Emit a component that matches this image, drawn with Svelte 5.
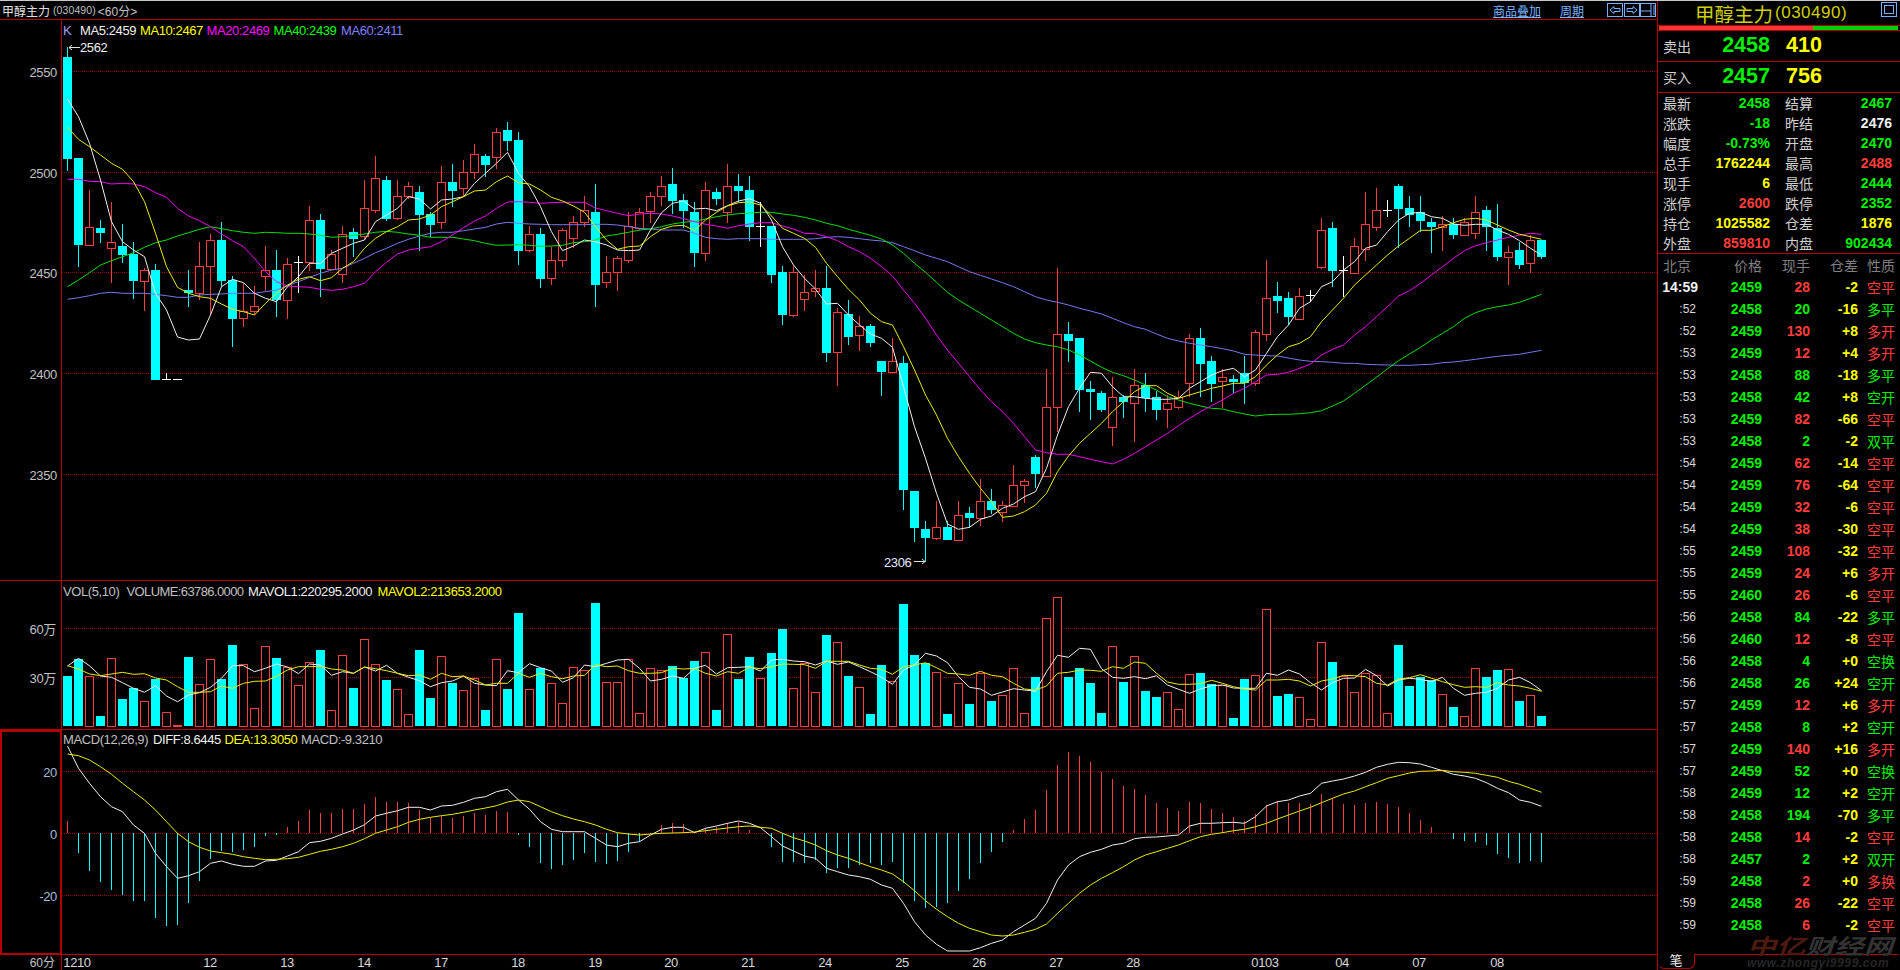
<script>
  const xAt = (i) => Math.round(67.3 + 11 * i) + 0.5;
  const off = (arr, d) => arr.map((v) => v + d);
  const pts = (arr, f) => arr.map((v, i) => xAt(i) + ',' + f(v).toFixed(1)).join(' ');

  const ma5 = [297,350,430,540,665,725,750,770,880,930,1011,1020,1017,945,860,838,848,880,895,905,860,830,790,790,760,745,730,720,665,645,625,590,597,627,600,597,590,550,520,490,457,520,560,620,695,752,738,720,725,735,750,752,
    ...off([330,270,218,190,183,207,205,212,197,183,176,190,240,320,375,415,447,492,490,525,555,582,595,622,740,860],420),
    1375,1480,1572,1588,1582,1558,1548,1525,1512,1490,1475,1405,1305,
    ...off([800,745,697,700,740,770,770,775,778,778,775,745,725,705,692,685,710,690,640,590],420),
    975,925,905,860,845,810,785,745,735,695,660,640,637,650,655,672,676,673,673,690,703,722,745,765];
  const ma10 = [382,418,440,465,490,508,545,605,700,800,862,880,890,895,912,928,935,945,910,880,855,838,830,842,833,805,785,745,715,695,680,660,657,645,620,605,590,573,570,545,528,548,552,570,592,603,618,637,680,720,748,740,
    ...off([318,290,268,258,256,272,240,217,198,188,186,195,228,265,280,295,322,370,410,448,480,520,545,555,620,690,765,825],420),
    1315,1370,1420,1465,1505,1552,1548,1535,1515,1480,1415,1368,1330,
    ...off([880,850,815,785,755,737,737,760,775,765,755,745,738,730,730],420),
    1130,1095,1065,1040,1030,1010,965,930,895,855,825,795,765,738,715,691,691,680,668,658,655,660,675,690,703,710,718];
  const ma20 = [538,538,544,545,552,550,552,560,578,592,625,648,662,680,702,722,740,775,815,845,858,860,862,868,871,868,860,850,815,787,762,750,745,740,725,705,683,663,648,625,606,605,607,610,608,607,607,607,624,632,640,647,
    ...off([222,220,222,228,236,245,253,258,265,257,252,248,248,258,267,280,281,290,302,320,335,355,380,408,450,490,535,585,630,670,710,750,785,815,850,890,930,938,943,943,950,958,965,972,958,940,920,900,880,857,835,815,797,780,760,745,725,705,703],420),
    1117,1105,1092,1065,1048,1035,1005,980,950,920,888,872,850,825,800,775,752,737,728,720,712,706,700,703];
  const ma40 = [860,840,818,795,782,770,758,742,728,720,708,698,688,680,686,692,697,700,697,698,700,700,702,706,712,710,706,702,697,694,697,702,706,712,712,712,717,722,730,736,735,734,736,739,738,736,728,725,720,708,703,697,
    ...off([270,267,260,252,247,244,237,230,225,221,219,217,217,222,226,232,240,250,257,268,277,286,297,315,340,370,397,427,457,480,500,520,540,560,580,597,608,615,620,630,645,663,682,697,707,720,735,750,770,780,790,798,805,807,815,822,828,824,823],420),
    1243,1241,1238,1232,1218,1203,1180,
    ...off([286,262,236,212,192,172,150,130,110,85,68,57,50,45,37,25,13],870)];
  const ma60 = [898,893,887,880,877,880,880,880,883,887,892,892,885,883,882,880,880,880,875,870,857,845,832,820,810,805,790,775,758,745,730,718,708,700,697,697,692,687,682,672,667,670,672,673,674,674,674,674,673,673,675,680,
    ...off([265,267,270,270,270,280,292,296,298,296,296,296,298,298,298,298,296,292,290,292,296,300,303,308,320,332,345,355,365,380,395,406,417,428,440,455,470,480,487,495,505,513,522,535,548,560,568,582,595,603],420),
    ...off([160,165,170,176,183,193,195,197,198,204,210,214,215,217,220,220,223,224,225,226,226,224,223,218,216,212,208,203,199,196,193,187,181],870)];

  const mainY = (v) => v / 3;
  const lines = [
    { cls: 'l60', p: pts(ma60, mainY) },
    { cls: 'l40', p: pts(ma40, mainY) },
    { cls: 'l20', p: pts(ma20, mainY) },
    { cls: 'l5', p: pts(ma5, mainY) },
    { cls: 'l10', p: pts(ma10, mainY) }
  ];

  // type (0 falling, 1 rising, 2 flat), body top, body bottom, wick top, wick bottom
  const candles = [
    [0,57,159,47,171],[0,158,245,158,267],[1,227,245,190,245],[0,228,233,220,243],[1,242,248,202,283],[0,246,255,224,263],[0,254,281,242,299],[1,270,281,268,311],[0,270,380,264,380],[2,379,379,373,379],
    [2,379,379,379,379],[0,290,293,270,307],[1,266,293,242,300],[1,240,266,234,315],[0,240,281,222,287],[0,280,319,276,347],[1,311,318,283,327],[1,306,311,286,315],[1,270,276,246,291],[0,270,300,250,317],
    [1,264,300,258,319],[2,262,262,256,293],[1,220,262,206,271],[0,220,269,214,297],[1,254,269,250,270],[1,234,274,226,283],[0,232,239,228,257],[1,208,236,180,240],[1,178,210,156,213],[0,180,219,176,221],
    [1,196,218,180,220],[1,186,196,182,199],[0,192,215,186,251],[0,214,225,212,237],[1,182,222,166,229],[0,182,191,164,207],[1,172,188,160,197],[1,154,172,144,179],[0,156,165,154,177],[1,132,157,128,169],
    [0,130,141,122,151],[0,140,251,132,265],[1,234,250,226,252],[0,234,279,228,288],[1,260,278,247,285],[1,230,260,228,267],[1,222,238,216,248],[1,210,222,196,227],[0,212,285,184,307],[1,272,282,256,288],
    [1,258,272,256,291],[1,226,260,212,263],[1,212,228,208,230],[1,196,211,192,223],[1,186,196,176,206],[0,184,201,168,214],[0,200,211,194,228],[0,212,253,202,267],[1,190,253,182,261],[0,192,199,188,205],
    [1,186,212,164,223],[0,186,191,174,202],[0,190,227,176,241],[2,226,226,202,247],[0,226,275,226,283],[0,272,315,266,325],[1,272,315,266,317],[1,292,299,275,311],[1,288,291,270,297],[0,288,353,266,362],
    [1,312,352,308,386],[0,314,337,300,345],[1,326,335,316,351],[0,326,343,324,347],[0,361,372,361,396],[1,361,372,338,372],[0,363,490,356,510],[0,491,528,491,542],[0,529,538,521,562],[1,527,538,501,540],
    [0,527,540,521,540],[1,515,540,501,540],[0,513,518,507,528],[1,501,518,479,526],[0,501,510,489,514],[1,505,512,501,522],[1,485,506,465,506],[1,481,485,479,503],[0,457,474,455,488],[1,407,476,369,476],
    [1,334,407,268,432],[0,334,341,322,362],[0,338,390,338,412],[0,389,392,381,420],[0,393,410,391,412],[1,397,427,377,446],[0,397,402,395,418],[1,385,403,369,442],[0,385,398,373,412],[0,397,410,391,420],
    [1,403,409,395,428],[1,397,407,391,409],[1,338,383,334,397],[0,338,364,328,397],[0,361,384,356,402],[1,377,381,369,408],[0,379,382,375,393],[0,373,383,356,404],[1,332,383,330,386],[1,298,334,260,341],
    [0,296,301,282,313],[0,298,317,292,325],[1,296,319,288,320],[2,295,295,290,302],[1,230,267,218,269],[0,228,271,222,287],[2,270,270,256,297],[1,246,273,238,273],[1,224,249,192,261],[1,210,227,188,231],
    [2,210,210,200,217],[0,186,209,184,248],[0,208,215,196,227],[0,212,221,196,232],[0,222,227,218,253],[1,224,227,216,251],[0,224,235,218,239],[1,222,235,218,235],[1,212,233,196,239],[0,210,227,206,251],
    [0,228,257,204,261],[1,252,257,246,285],[0,250,265,242,269],[1,240,263,235,273],[0,240,257,240,259]
  ];

  const volumes = [318,268,-318,438,-265,387,354,-394,327,-427,-466,261,-343,-268,327,225,-283,-415,-229,264,-290,-346,-277,240,-421,-256,354,-208,-283,330,-358,-433,240,384,-259,339,-361,-325,420,-268,357,129,-358,294,-340,-400,-292,-301,99,-337,-337,-268,-430,-295,-301,288,325,273,-247,420,-193,327,261,-325,249,177,-355,-279,-367,195,-217,318,-352,432,285,-334,102,255,279,-307,432,-340,402,-310,393,-376,-295,-430,321,-145,-82,321,294,339,429,-229,336,-259,363,381,-367,-418,-313,309,342,-345,444,327,-316,-118,378,372,-382,-448,-217,276,-318,-367,-310,-316,-430,225,348,321,330,-373,411,-439,-295,321,300,-298,393,-376,438];
  const mavol1 = [288,265,287,318,322,338,355,367,347,378,395,375,368,352,325,287,287,305,295,282,291,311,282,285,316,305,310,291,303,286,310,322,332,350,338,333,318,340,345,347,302,308,281,293,303,337,323,285,290,280,270,268,295,
    333,328,318,325,295,286,312,293,292,290,303,270,268,273,275,285,273,283,276,290,305,322,343,300,285,250,258,278,320,352,357,376,366,356,360,364,305,256,262,235,238,296,322,325,320,326,317,345,358,370,357,347,345,354,355,355,
    310,316,300,312,338,360,338,325,324,298,317,348,330,325,328,335,322,355,376,370,367,355,330,322,338,362];
  const mavol2 = [287,297,312,317,312,307,313,311,324,330,350,367,367,365,348,355,340,334,333,319,300,290,290,289,297,300,310,291,296,302,310,317,315,328,310,320,318,330,345,340,340,310,322,310,320,326,318,316,284,290,288,302,310,
    310,308,295,297,295,310,318,305,310,292,296,290,282,283,284,295,274,274,274,285,295,298,313,290,285,278,293,310,312,316,304,316,320,340,357,360,348,310,307,300,301,304,290,295,276,280,310,336,343,343,341,331,340,350,357,360,
    330,330,328,333,348,333,327,316,317,320,340,345,327,323,314,325,335,344,352,350,352,338,345,348,355,364];
  const lowerY = (v) => 570 + v / 3;

  const hist = [752,850,902,935,960,975,993,993,1043,1067,1065,998,933,867,843,846,840,830,798,795,770,752,720,729,729,717,717,702,682,695,695,700,720,743,737,745,738,729,735,723,726,794,830,880,896,885,870,848,875,882,873,845,815,792,765,760,762,787,775,770,760,755,780,789,830,875,875,880,870,908,895,895,885,878,885,875,940,992,1015,1012,998,962,926,880,845,815,780,747,720,660,585,546,558,576,605,627,648,657,675,699,714,723,696,699,717,729,741,753,732,705,693,699,699,702,672,684,702,705,699,696,702,711,729,750,770,788,807,813,816,825,852,864,879,873,876];
  const diff = [528,595,640,680,710,725,765,790,850,890,925,917,905,880,873,883,889,889,873,871,858,845,818,814,805,792,780,764,738,730,722,712,712,720,708,706,697,685,680,665,658,690,718,755,778,785,785,785,805,825,830,820,815,
    795,778,772,772,788,775,768,760,753,760,773,800,828,843,858,865,895,905,915,920,928,945,955,1000,1055,1095,1123,1143,1143,1143,1133,1120,1110,1085,1065,1045,1000,930,885,860,847,838,825,820,806,802,801,798,795,768,760,760,758,757,760,740,
    708,695,690,678,670,640,633,627,618,607,592,583,577,578,582,592,602,613,618,625,638,655,668,690,697,709];
  const dea = [552,557,570,590,613,640,665,690,720,755,790,815,832,843,848,853,860,865,869,868,866,862,853,844,838,830,820,806,790,780,770,757,748,742,737,733,727,720,714,707,696,690,695,710,725,737,747,755,765,778,788,792,795,
    792,790,789,788,786,782,778,774,770,768,772,775,790,803,813,825,842,855,865,878,890,900,912,935,962,992,1018,1040,1060,1075,1085,1095,1098,1095,1087,1078,1062,1030,1000,970,945,925,908,890,870,855,845,835,825,812,800,793,788,782,778,770,
    760,747,735,723,712,698,685,672,663,650,638,625,617,609,604,603,601,605,607,610,616,622,634,643,655,667];

  const priceGrid = [{ y: 71.5, t: '2550' }, { y: 172.5, t: '2500' }, { y: 272.5, t: '2450' }, { y: 373.5, t: '2400' }, { y: 474.5, t: '2350' }];
  const macdGrid = [{ y: 771.5, t: '20' }, { y: 833.5, t: '0' }, { y: 895.5, t: '-20' }];
  const dates = [[77,'1210'],[210,'12'],[287,'13'],[364,'14'],[441,'17'],[518,'18'],[595,'19'],[671,'20'],[748,'21'],[825,'24'],[902,'25'],[979,'26'],[1056,'27'],[1133,'28'],[1265,'0103'],[1342,'04'],[1419,'07'],[1497,'08']];

  const stats = [
    ['最新','2458','g','结算','2467','g'],['涨跌','-18','g','昨结','2476','w'],['幅度','-0.73%','g','开盘','2470','g'],['总手','1762244','y','最高','2488','r'],
    ['现手','6','y','最低','2444','g'],['涨停','2600','r','跌停','2352','g'],['持仓','1025582','y','仓差','1876','y'],['外盘','859810','r','内盘','902434','g']
  ];
  const trades = [
    ['14:59','2459','28','r','-2','空平','r'],[':52','2458','20','g','-16','多平','g'],[':52','2459','130','r','+8','多开','r'],[':53','2459','12','r','+4','多开','r'],[':53','2458','88','g','-18','多平','g'],
    [':53','2458','42','g','+8','空开','g'],[':53','2459','82','r','-66','空平','r'],[':53','2458','2','g','-2','双平','g'],[':54','2459','62','r','-14','空平','r'],[':54','2459','76','r','-64','空平','r'],
    [':54','2459','32','r','-6','空平','r'],[':54','2459','38','r','-30','空平','r'],[':55','2459','108','r','-32','空平','r'],[':55','2459','24','r','+6','多开','r'],[':55','2460','26','r','-6','空平','r'],
    [':56','2458','84','g','-22','多平','g'],[':56','2460','12','r','-8','空平','r'],[':56','2458','4','g','+0','空换','g'],[':56','2458','26','g','+24','空开','g'],[':57','2459','12','r','+6','多开','r'],
    [':57','2458','8','g','+2','空开','g'],[':57','2459','140','r','+16','多开','r'],[':57','2459','52','g','+0','空换','g'],[':58','2459','12','g','+2','空开','g'],[':58','2458','194','g','-70','多平','g'],
    [':58','2458','14','r','-2','空平','r'],[':58','2457','2','g','+2','双开','g'],[':59','2458','2','r','+0','多换','r'],[':59','2458','26','r','-22','空平','r'],[':59','2458','6','r','-2','空平','r']
  ];
</script>

<div class="app">
  <section class="left">
    <header class="top">
      <span class="name">甲醇主力</span><span class="code">(030490)</span><span class="period">&lt;60分&gt;</span>
      <span class="link first">商品叠加</span>
      <span class="link second">周期</span>
      <svg class="btns" viewBox="0 0 50 14" width="50" height="14">
        <rect x="0.5" y="0.5" width="15" height="13" />
        <path d="M3 7 7 3.5V5.5H13V8.5H7V10.5Z" />
        <rect x="17.5" y="0.5" width="15" height="13" />
        <path d="M30 7 26 3.5V5.5H20V8.5H26V10.5Z" />
        <rect x="33.5" y="0.5" width="15" height="13" />
        <path d="M34 8H44M44 1V13M46 3H48M46 5H48M46 7H48M46 9H48M46 11H48" />
      </svg>
    </header>

    <svg class="panel main" width="1657" height="561" viewBox="0 20 1657 561">
      {#each priceGrid as g}
        <line class="grid" x1="62" x2="1657" y1={g.y} y2={g.y} />
        <text class="axis" x="57" y={g.y + 5}>{g.t}</text>
      {/each}
      {#each candles as c, i}
        {#if c[0] === 2}
          <line class="w1" x1={xAt(i)} x2={xAt(i)} y1={c[3]} y2={c[4]} />
          <line class="w1" x1={xAt(i) - 4.5} x2={xAt(i) + 4.5} y1={c[1] + 0.5} y2={c[1] + 0.5} />
        {:else}
          <line class={c[0] ? 'r1' : 'c1'} x1={xAt(i)} x2={xAt(i)} y1={c[3]} y2={c[4]} />
          {#if c[0]}
            <rect class="hollow" x={xAt(i) - 4} y={c[1] + 0.5} width="8" height={c[2] - c[1]} />
          {:else}
            <rect class="solid" x={xAt(i) - 4.5} y={c[1]} width="9" height={c[2] - c[1]} />
          {/if}
        {/if}
      {/each}
      {#each lines as l}
        <polyline class={l.cls} points={l.p} />
      {/each}
      <text class="lab kk" x="63" y="34.5">K</text>
      <text class="lab wt" x="80" y="34.5">MA5:2459</text>
      <text class="lab yl" x="140" y="34.5">MA10:2467</text>
      <text class="lab mg" x="206.5" y="34.5">MA20:2469</text>
      <text class="lab gn" x="273.5" y="34.5">MA40:2439</text>
      <text class="lab bl" x="341" y="34.5">MA60:2411</text>
      <path class="mark" d="M80 47.5H69M72 45 69 47.5 72 50" />
      <text class="lab wt" x="80" y="52">2562</text>
      <text class="lab pale" x="884" y="566.5">2306</text>
      <path class="mark" d="M914 561.5H925M922 559 925 561.5 922 564" />
      <line class="red" x1="61.5" x2="61.5" y1="20" y2="581" />
      <line class="red" x1="0" x2="1657" y1="580.5" y2="580.5" />
    </svg>

    <svg class="panel vol" width="1657" height="149" viewBox="0 581 1657 149">
      <line class="grid" x1="62" x2="1657" y1="628.5" y2="628.5" />
      <line class="grid" x1="62" x2="1657" y1="677.5" y2="677.5" />
      <text class="axis" x="56" y="634">60万</text>
      <text class="axis" x="56" y="683">30万</text>
      {#each volumes as v, i}
        {#if v < 0}
          <rect class="hollow" x={xAt(i) - 4} y={Math.round(lowerY(-v)) + 0.5} width="8" height={725.5 - Math.round(lowerY(-v))} />
        {:else}
          <rect class="solid" x={xAt(i) - 4.5} y={Math.round(lowerY(v))} width="9" height={726 - Math.round(lowerY(v))} />
        {/if}
      {/each}
      <polyline class="l5" points={pts(mavol1, lowerY)} />
      <polyline class="l10" points={pts(mavol2, lowerY)} />
      <text class="lab gy" x="63" y="595.5">VOL(5,10)</text>
      <text class="lab gy tight" x="126.5" y="595.5">VOLUME:63786.0000</text>
      <text class="lab wt" x="248" y="595.5">MAVOL1:220295.2000</text>
      <text class="lab yl" x="377.6" y="595.5">MAVOL2:213653.2000</text>
      <line class="red" x1="61.5" x2="61.5" y1="581" y2="730" />
      <line class="red" x1="0" x2="1657" y1="729.5" y2="729.5" />
    </svg>

    <svg class="panel macd" width="1657" height="225" viewBox="0 730 1657 225">
      {#each macdGrid as g}
        <line class="grid" x1="62" x2="1657" y1={g.y} y2={g.y} />
        <text class="axis blue" x="57" y={g.y + 5}>{g.t}</text>
      {/each}
      {#each hist as h, i}
        <line class={h < 790 ? 'r1' : 'c1'} x1={xAt(i)} x2={xAt(i)} y1="833" y2={lowerY(h)} />
      {/each}
      <polyline class="l5" points={pts(diff, lowerY)} />
      <polyline class="l10" points={pts(dea, lowerY)} />
      <text class="lab gy" x="63" y="744">MACD(12,26,9)</text>
      <text class="lab wt" x="153" y="744">DIFF:8.6445</text>
      <text class="lab yl" x="224.5" y="744">DEA:13.3050</text>
      <text class="lab gy" x="301" y="744">MACD:-9.3210</text>
      <rect class="box" x="1" y="731" width="60" height="223" />
      <line class="red" x1="0" x2="1657" y1="954.5" y2="954.5" />
    </svg>

    <svg class="panel dates" width="1657" height="15" viewBox="0 955 1657 15">
      <text class="axis sm" x="55" y="967">60分</text>
      {#each dates as d}
        <text class="lab tick" x={d[0]} y="967">{d[1]}</text>
      {/each}
      <line class="red" x1="61.5" x2="61.5" y1="955" y2="970" />
    </svg>
  </section>

  <aside class="right">
    <div class="title">
      <span class="tcn">甲醇主力</span><span class="tcode">(030490)</span>
      <svg class="maxi" width="16" height="15" viewBox="0 0 16 15">
        <rect x="0.5" y="0.5" width="15" height="14" />
        <rect x="3.5" y="3.5" width="9" height="8" />
      </svg>
    </div>
    <div class="ratio"><span class="up"></span><span class="down"></span></div>
    <div class="quote">
      <span class="qlabel">卖出</span><span class="big g">2458</span><span class="big y">410</span>
    </div>
    <div class="quote">
      <span class="qlabel">买入</span><span class="big g">2457</span><span class="big y">756</span>
    </div>
    <div class="stats">
      {#each stats as s}
        <span class="slabel">{s[0]}</span><span class="num {s[2]}">{s[1]}</span>
        <span class="slabel second-col">{s[3]}</span><span class="num {s[5]}">{s[4]}</span>
      {/each}
    </div>
    <div class="trow head">
      <span class="tleft">北京</span><span>价格</span><span>现手</span><span>仓差</span><span class="tkind">性质</span>
    </div>
    <div class="trades">
      {#each trades as t, i}
        <div class="trow">
          <span class={i === 0 ? 'time strong' : 'time'}>{t[0]}</span>
          <span class="num g">{t[1]}</span>
          <span class="num {t[3]}">{t[2]}</span>
          <span class="num y">{t[4]}</span>
          <span class="tkind {t[6]}">{t[5]}</span>
        </div>
      {/each}
    </div>
    <div class="tabbar">
      <span class="tab">笔</span><span class="tabline"></span>
    </div>
    <div class="watermark">
      <div class="wm-top"><span class="wm-red">中亿</span><span class="wm-gray">财经网</span></div>
      <div class="wm-url">www.zhongyi9999.com</div>
    </div>
  </aside>
</div>

<style>
  :global(body) {
    margin: 0;
    background: #000;
  }
  .app {
    display: flex;
    width: 1900px;
    height: 970px;
    box-sizing: border-box;
    border-top: 1px solid #c8c8c8;
    background: #000;
    overflow: hidden;
    font-family: "Liberation Sans", "Noto Sans CJK SC", sans-serif;
    color: #c8c8c8;
  }
  .left {
    width: 1657px;
    flex: none;
    display: flex;
    flex-direction: column;
  }
  .top {
    height: 18px;
    flex: none;
    display: flex;
    align-items: center;
    padding-left: 2px;
    border-bottom: 1px solid #b40000;
    font-size: 12px;
    box-sizing: content-box;
  }
  .name {
    color: #e0e0e0;
    margin-right: 3px;
  }
  .code {
    font-size: 10.5px;
    letter-spacing: 0.1px;
    color: #c0c0c0;
    margin-right: 2px;
  }
  .period {
    color: #c0c0c0;
    font-size: 12px;
  }
  .link {
    color: #78b4ff;
    text-decoration: underline;
    font-size: 12px;
  }
  .first {
    margin-left: auto;
  }
  .second {
    margin-left: 19px;
  }
  .btns {
    margin: 0 0 0 23px;
    fill: none;
    stroke: #78b0ff;
    stroke-width: 1;
  }
  .panel {
    display: block;
    flex: none;
  }
  .grid {
    stroke: #900000;
    stroke-width: 1;
    stroke-dasharray: 1 1;
    shape-rendering: crispEdges;
  }
  .red {
    stroke: #b40000;
    stroke-width: 1;
    shape-rendering: crispEdges;
  }
  .box {
    fill: none;
    stroke: #b40000;
    stroke-width: 2;
    shape-rendering: crispEdges;
  }
  .axis {
    fill: #c0c0c0;
    font-size: 13px;
    letter-spacing: -0.35px;
    text-anchor: end;
  }
  .axis.blue {
    fill: #a8b8d8;
  }
  .axis.sm {
    font-size: 12px;
    letter-spacing: 0;
  }
  .lab {
    font-size: 13px;
    letter-spacing: -0.4px;
  }
  .lab.tight {
    letter-spacing: -0.6px;
  }
  .tick {
    fill: #d8d8d8;
    text-anchor: middle;
  }
  .kk { fill: #a0a0ff; }
  .wt { fill: #f0f0f0; }
  .yl { fill: #ffff00; }
  .mg { fill: #ff00ff; }
  .gn { fill: #00ff00; }
  .bl { fill: #8080ff; }
  .gy { fill: #c0c0c0; }
  .pale { fill: #e0e8ff; }
  .mark {
    fill: none;
    stroke: #e0e0e0;
    stroke-width: 1;
  }
  .c1 {
    stroke: #00ffff;
    stroke-width: 1;
    shape-rendering: crispEdges;
  }
  .r1 {
    stroke: #ff3c3c;
    stroke-width: 1;
    shape-rendering: crispEdges;
  }
  .w1 {
    stroke: #ffffff;
    stroke-width: 1;
    shape-rendering: crispEdges;
  }
  .solid {
    fill: #00ffff;
    shape-rendering: crispEdges;
  }
  .hollow {
    fill: #000;
    stroke: #ff3c3c;
    stroke-width: 1;
    shape-rendering: crispEdges;
  }
  polyline {
    fill: none;
    stroke-width: 1;
    stroke-linejoin: round;
  }
  .l5 { stroke: #f0f0f0; }
  .l10 { stroke: #ecec00; }
  .l20 { stroke: #f000f0; }
  .l40 { stroke: #00e000; }
  .l60 { stroke: #7878f0; }

  .right {
    position: relative;
    flex: 1;
    box-sizing: border-box;
    border-left: 1px solid #b40000;
    display: flex;
    flex-direction: column;
    font-size: 14px;
  }
  .title {
    position: relative;
    height: 24px;
    flex: none;
    display: flex;
    align-items: center;
    padding-left: 37px;
    color: #d0d000;
  }
  .tcn {
    font-size: 19.5px;
  }
  .tcode {
    font-size: 17px;
    letter-spacing: 0.5px;
    margin-left: 2px;
  }
  .maxi {
    position: absolute;
    right: 3px;
    top: 1px;
    fill: none;
    stroke: #78b0ff;
  }
  .ratio {
    height: 4px;
    flex: none;
    display: flex;
    padding: 0 2px 0 1px;
    border-top: 1px solid #b40000;
    border-bottom: 1px solid #b40000;
    box-sizing: content-box;
  }
  .up {
    width: 154px;
    background: #ff3232;
  }
  .down {
    flex: 1;
    background: #00d000;
  }
  .quote {
    height: 30px;
    flex: none;
    display: grid;
    grid-template-columns: 39px 68px 1fr;
    align-items: center;
    padding-left: 5px;
    border-bottom: 1px solid #b40000;
  }
  .qlabel {
    color: #d0d0d0;
  }
  .big {
    font-size: 21.5px;
    font-weight: 700;
    line-height: 1;
  }
  .big.g {
    text-align: right;
  }
  .big.y {
    padding-left: 16px;
  }
  .stats {
    height: 160px;
    flex: none;
    display: grid;
    grid-template-columns: 34px 73px 44px 78px;
    grid-auto-rows: 20px;
    align-items: center;
    padding-left: 5px;
    border-bottom: 1px solid #b40000;
  }
  .slabel {
    color: #d0d0d0;
  }
  .second-col {
    padding-left: 15px;
    white-space: nowrap;
  }
  .num {
    font-weight: 700;
    text-align: right;
  }
  .g { color: #00f000; }
  .y { color: #ffff00; }
  .r { color: #ff3c3c; }
  .w { color: #f0f0f0; }
  .trades {
    flex: none;
  }
  .trow {
    height: 22px;
    display: grid;
    grid-template-columns: 40px 64px 48px 48px 1fr;
    align-items: center;
  }
  .head {
    color: #808080;
    text-align: right;
  }
  .tleft {
    text-align: left;
    padding-left: 5px;
    white-space: nowrap;
  }
  .tkind {
    text-align: left;
    padding-left: 9px;
  }
  .time {
    font-size: 12px;
    color: #d8d8d8;
    text-align: right;
    padding-right: 2px;
  }
  .time.strong {
    font-size: 14px;
    font-weight: 700;
    color: #f0f0f0;
    padding-right: 0;
    white-space: nowrap;
  }
  .tabbar {
    margin-top: auto;
    height: 16px;
    flex: none;
    display: flex;
    align-items: flex-start;
  }
  .tab {
    width: 36px;
    height: 14px;
    border: 1px solid #b40000;
    border-top: none;
    border-left: none;
    border-radius: 0 0 6px 6px;
    color: #f0f0f0;
    text-align: center;
    line-height: 14px;
    font-size: 13px;
  }
  .tabline {
    flex: 1;
    border-top: 1px solid #b40000;
    margin-right: 2px;
  }
  .watermark {
    position: absolute;
    left: 89px;
    top: 935px;
    pointer-events: none;
    font-style: italic;
    font-weight: 700;
  }
  .wm-top {
    font-size: 21px;
    line-height: 21px;
    width: 105px;
    transform: scaleX(1.39);
    transform-origin: left;
    white-space: nowrap;
  }
  .wm-red {
    color: #4e1a10;
  }
  .wm-gray {
    color: #333;
  }
  .wm-url {
    font-size: 12px;
    line-height: 12px;
    letter-spacing: 0.6px;
    color: #262626;
  }
</style>
